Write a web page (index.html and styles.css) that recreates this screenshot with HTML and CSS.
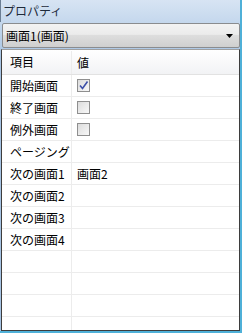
FILE: index.html
```html
<!DOCTYPE html>
<html lang="ja">
<head>
<meta charset="utf-8">
<link rel="stylesheet" href="styles.css">
</head>
<body>
<div class="window">
  <div class="title">プロパティ</div>
  <div class="combo">
    <span class="combo-text">画面1(画面)</span>
    <svg class="arrow" width="7" height="4" viewBox="0 0 7 4"><path d="M0 0H7L3.5 4Z" fill="#000"/></svg>
  </div>
  <div class="grid">
    <div class="row head"><div class="c1">項目</div><div class="c2">値</div></div>
    <div class="row"><div class="c1">開始画面</div><div class="c2"><span class="cb checked"><svg width="11" height="11" viewBox="0 0 11 11"><path d="M2 5.5L4.5 8.5L9.5 1.5" stroke="#3c4fa8" stroke-width="1.6" fill="none"/></svg></span></div></div>
    <div class="row"><div class="c1">終了画面</div><div class="c2"><span class="cb"></span></div></div>
    <div class="row"><div class="c1">例外画面</div><div class="c2"><span class="cb"></span></div></div>
    <div class="row"><div class="c1 wide">ページング</div><div class="c2"></div></div>
    <div class="row"><div class="c1">次の画面1</div><div class="c2">画面2</div></div>
    <div class="row"><div class="c1">次の画面2</div><div class="c2"></div></div>
    <div class="row"><div class="c1">次の画面3</div><div class="c2"></div></div>
    <div class="row"><div class="c1">次の画面4</div><div class="c2"></div></div>
    <div class="row"><div class="c1"></div><div class="c2"></div></div>
    <div class="row"><div class="c1"></div><div class="c2"></div></div>
    <div class="row"><div class="c1"></div><div class="c2"></div></div>
    <div class="row last"><div class="c1"></div><div class="c2"></div></div>
  </div>
</div>
</body>
</html>
```
FILE: styles.css
```css
html, body {
  margin: 0;
  padding: 0;
  background: #ffffff;
}
body {
  width: 242px;
  height: 333px;
  overflow: hidden;
  font-family: "Noto Sans CJK JP", "Noto Sans", sans-serif;
  font-size: 12px;
  color: #000;
}
.window {
  width: 240px;
  height: 331px;
  border-right: 2px solid #4fb0d8;
  border-bottom: 2px solid #4fb0d8;
  background: linear-gradient(#d7e4f3, #a6c3e3 60px);
  display: flex;
  flex-direction: column;
  box-sizing: content-box;
}
.title {
  height: 22px;
  line-height: 22px;
  padding-left: 2px;
  font-size: 12px;
  color: #1e2a3a;
  border-left: 1px solid #6b7e94;
}
.combo {
  margin: 1px 0 1px 2px;
  height: 23px;
  border: 1px solid #8a8c8f;
  border-radius: 2px;
  background: linear-gradient(#f3f3f3, #ebebeb 45%, #dddddd 50%, #cfcfcf);
  display: flex;
  align-items: center;
  padding: 0 4px 0 3px;
}
.combo-text {
  flex: 1;
}
.arrow {
  margin-right: 2px;
}
.grid {
  flex: 1;
  margin-left: 1px;
  border-left: 1px solid #3d3d3d;
  border-top: 1px solid #a0a0a0;
  border-bottom: 1px solid #3d3d3d;
  border-right: 1px solid #3d3d3d;
  background: #fff;
  display: flex;
  flex-direction: column;
  overflow: hidden;
}
.row {
  display: flex;
  height: 22px;
  flex: none;
  border-bottom: 1px solid #ececec;
  box-sizing: border-box;
}
.row.head {
  height: 23px;
  padding-top: 1px;
  box-sizing: content-box;
  background: linear-gradient(#ffffff, #f2f3f5);
  border-bottom: 1px solid #e2e2e2;
}
.c1 {
  width: 70px;
  padding-left: 8px;
  border-right: 1px solid #ececec;
  box-sizing: border-box;
  line-height: 21px;
  white-space: nowrap;
}
.c2 {
  flex: 1;
  padding-left: 5px;
  line-height: 21px;
  display: flex;
  align-items: center;
}
.cb {
  width: 11px;
  height: 11px;
  border: 1px solid #8f8f8f;
  background: linear-gradient(135deg, #dcdcdc, #f8f8f8);
  display: block;
  position: relative;
}
.cb svg {
  display: block;
}
```
